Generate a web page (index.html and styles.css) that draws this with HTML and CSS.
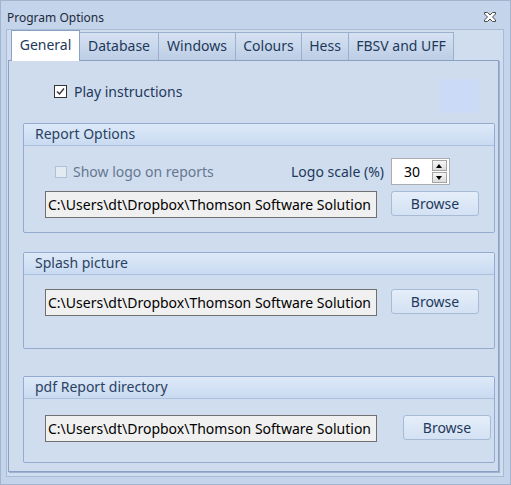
FILE: index.html
```html
<!DOCTYPE html>
<html lang="en">
<head>
    <meta charset="UTF-8">
    <title>Program Options</title>
    <link rel="stylesheet" href="styles.css">
</head>
<body>
    <div class="window">
        <div class="titlebar">
            <span class="title">Program Options</span>
            <svg class="close" width="12" height="10" viewBox="0 0 12 10">
                <path d="M0.5 0.5h3l2.5 2.5 2.5-2.5h3v1.5l-3 3 3 3v1.5h-3l-2.5-2.5-2.5 2.5h-3v-1.5l3-3-3-3z" fill="#fff" stroke="#4a4a4a" stroke-width="1"/>
            </svg>
        </div>

        <div class="frame">
            <div class="tabs">
                <div class="tab active tab-general">General</div>
                <div class="tab tab-database">Database</div>
                <div class="tab tab-windows">Windows</div>
                <div class="tab tab-colours">Colours</div>
                <div class="tab tab-hess">Hess</div>
                <div class="tab tab-fbsv">FBSV and UFF</div>
            </div>

            <div class="page">
                <div class="play-row">
                    <label class="check">
                        <span class="box">
                            <svg width="11" height="11" viewBox="0 0 11 11"><path d="M2 5.5l2.5 2.5 4.5-5.5" fill="none" stroke="#333" stroke-width="1.4"/></svg>
                        </span>
                        Play instructions
                    </label>
                    <div class="swatch"></div>
                </div>

                <div class="group group-report">
                    <div class="group-head">Report Options</div>
                    <div class="group-body">
                        <div class="row">
                            <label class="check disabled">
                                <span class="box"></span>
                                Show logo on reports
                            </label>
                            <span class="scale-label">Logo scale (%)</span>
                            <div class="spinner">
                                <span class="value">30</span>
                                <div class="spin-btns">
                                    <span class="spin up"></span>
                                    <span class="spin down"></span>
                                </div>
                            </div>
                        </div>
                        <div class="row row-path">
                            <div class="path"><span>C:\Users\dt\Dropbox\Thomson Software Solution</span></div>
                            <button class="btn">Browse</button>
                        </div>
                    </div>
                </div>

                <div class="group group-splash">
                    <div class="group-head">Splash picture</div>
                    <div class="group-body">
                        <div class="row">
                            <div class="path"><span>C:\Users\dt\Dropbox\Thomson Software Solution</span></div>
                            <button class="btn">Browse</button>
                        </div>
                    </div>
                </div>

                <div class="group group-pdf">
                    <div class="group-head">pdf Report directory</div>
                    <div class="group-body">
                        <div class="row">
                            <div class="path"><span>C:\Users\dt\Dropbox\Thomson Software Solution</span></div>
                            <button class="btn btn-wide-gap">Browse</button>
                        </div>
                    </div>
                </div>
            </div>
        </div>
    </div>
</body>
</html>
```

FILE: styles.css
```css
* {
    box-sizing: border-box;
    margin: 0;
    padding: 0;
}

body {
    font-family: 'Noto Sans', 'Open Sans', sans-serif;
    background-color: #c4d4ea;
    color: #1e395b;
}

.window {
    width: 511px;
    height: 485px;
    border: 1px solid #a2b4ce;
    background-color: #c4d4ea;
}

.titlebar {
    height: 28px;
    display: flex;
    align-items: center;
    justify-content: space-between;
    padding: 4px 14px 0 6px;
}

.title {
    font-size: 12px;
    color: #1e2b3c;
}

.frame {
    height: 448px;
    margin: 0 6px 0 5px;
    border: 1px solid #a9bbd4;
    background-color: #d0ddef;
}

/* Tabs */
.tabs {
    display: flex;
    align-items: flex-end;
    height: 30px;
    padding-left: 4px;
}

.tab {
    height: 28px;
    margin-left: -1px;
    border: 1px solid #9bb0cf;
    border-bottom: none;
    background: linear-gradient(#d6e2f2, #bccde5);
    font-size: 14px;
    line-height: 26px;
    text-align: center;
}

.tab.active {
    position: relative;
    z-index: 1;
    height: 31px;
    margin-left: 0;
    margin-bottom: -1px;
    border-color: #8ba2c4;
    background: #fff;
    line-height: 28px;
}

.tab-general { width: 69px; }
.tab-database { width: 80px; }
.tab-windows { width: 78px; }
.tab-colours { width: 67px; }
.tab-hess { width: 48px; }
.tab-fbsv { width: 106px; }

/* Page */
.page {
    height: 412px;
    margin: 0 4px 0 1px;
    border: 1px solid #8aa1c3;
    box-shadow: 1px 1px 0 #9fb2cf;
    background-color: #cfdcee;
}

.play-row {
    display: flex;
    justify-content: space-between;
    margin-top: 18px;
    padding: 0 19px 0 45px;
}

.check {
    display: flex;
    align-items: center;
    gap: 7px;
    height: 13px;
    margin-top: 6px;
    font-size: 14px;
    color: #1e395b;
}

.box {
    width: 13px;
    height: 13px;
    border: 1px solid #333;
    background-color: #fff;
    display: flex;
    align-items: center;
    justify-content: center;
}

.check.disabled {
    gap: 6px;
    margin: 0 0 0 10px;
    color: #66778f;
}

.check.disabled .box {
    width: 12px;
    height: 12px;
    border-color: #b2c0d5;
    background-color: #e4eaf2;
}

.swatch {
    width: 40px;
    height: 34px;
    background-color: #cbdaf6;
}

/* Groups */
.group {
    width: 472px;
    margin: 10px 0 0 14px;
    border: 1px solid #92abcf;
    border-radius: 2px;
    background-color: #d0ddef;
}

.group-splash {
    margin-top: 19px;
}

.group-pdf {
    margin-top: 27px;
}

.group-head {
    height: 22px;
    padding-left: 11px;
    border-bottom: 1px solid #a9c0de;
    background: linear-gradient(#dde9f8, #c9daf1);
    font-size: 14px;
    line-height: 20px;
    color: #2a4262;
}

.group-body {
    padding: 14px 0 32px 21px;
}

.group-report .group-body {
    padding: 12px 0 14px 21px;
}

.group-pdf .group-body {
    padding: 16px 0 20px 21px;
}

.row {
    display: flex;
    align-items: flex-start;
    height: 27px;
}

.group-report .row:first-child {
    align-items: center;
}

.row-path {
    margin-top: 6px;
}

.scale-label {
    margin-left: auto;
    font-size: 14px;
}

.spinner {
    display: flex;
    align-items: center;
    justify-content: space-between;
    width: 59px;
    height: 27px;
    margin: 0 44px 0 7px;
    padding: 0 1px 0 12px;
    border: 1px solid #abadb3;
    background-color: #fff;
    font-size: 14px;
    color: #000;
}

.spin-btns {
    display: flex;
    flex-direction: column;
    gap: 1px;
    margin-right: 1px;
}

.spin {
    position: relative;
    width: 15px;
    height: 11px;
    border: 1px solid #a5a5a5;
    background: linear-gradient(#f6f6f6, #dcdcdc);
}

.spin::after {
    content: '';
    position: absolute;
    left: 3px;
    top: 3px;
    border-left: 3.5px solid transparent;
    border-right: 3.5px solid transparent;
}

.spin.up::after {
    border-bottom: 4px solid #000;
}

.spin.down::after {
    border-top: 4px solid #000;
}

.path {
    width: 332px;
    height: 27px;
    padding: 0 2px;
    border: 1px solid #707070;
    background-color: #f0f0f0;
    font-size: 14px;
    line-height: 25px;
    color: #000;
    white-space: nowrap;
    overflow: hidden;
}

.btn {
    width: 88px;
    height: 25px;
    margin-left: 14px;
    border: 1px solid #a7bbd6;
    border-radius: 3px;
    background: linear-gradient(#e5eefa, #d3e1f3);
    font-family: inherit;
    font-size: 14px;
    color: #1e395b;
}

.btn-wide-gap {
    margin-left: 26px;
}
```
